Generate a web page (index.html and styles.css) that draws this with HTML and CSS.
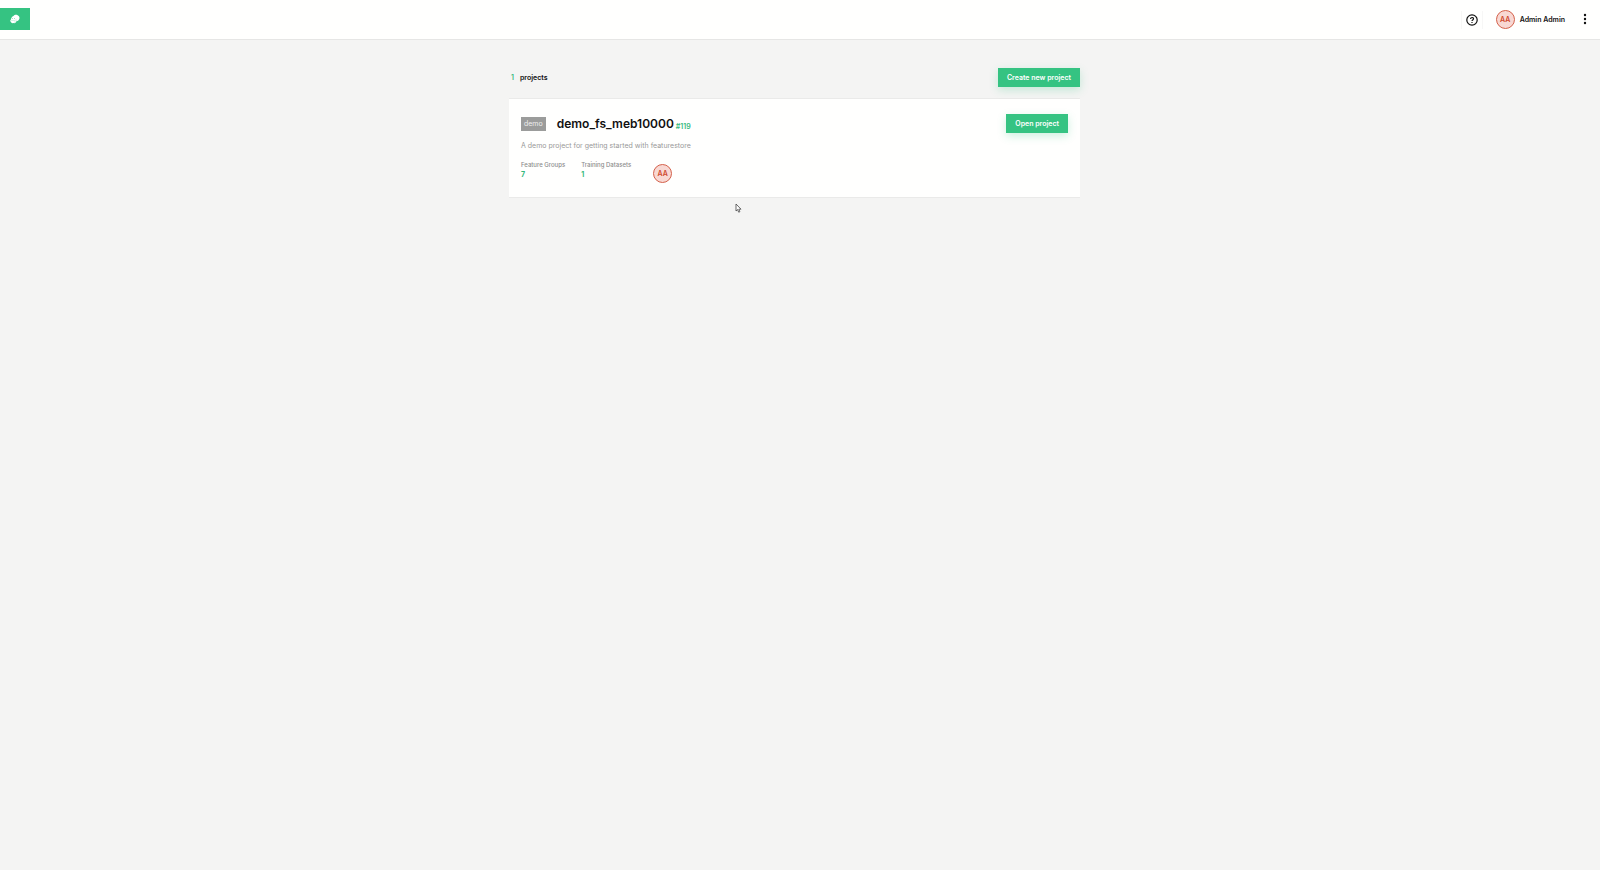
FILE: index.html
```html
<!DOCTYPE html>
<html lang="en">
<head>
    <meta charset="UTF-8">
    <meta name="viewport" content="width=device-width, initial-scale=1.0">
    <title>Projects</title>
    <link rel="stylesheet" href="styles.css">
</head>
<body>
    <header class="navbar">
        <a class="logo" href="#" aria-label="Home">
            <svg width="10" height="10" viewBox="0 0 20 20">
                <path fill="#fff" d="M7 4c2-4 8-3 9-1 3 1 4 6 2 8-1 2-3 3-5 3 0 3-3 5-6 4-2 1-5 0-5-2-2-1-2-4 0-5 0-3 2-6 5-7z"/>
                <g fill="#35c382" fill-opacity=".6">
                    <circle cx="5" cy="9" r="1"/>
                    <circle cx="9" cy="9" r="1"/>
                    <circle cx="4" cy="13" r="1"/>
                    <circle cx="8" cy="13" r="1"/>
                    <circle cx="12" cy="12" r="1"/>
                    <circle cx="10" cy="16" r="1"/>
                </g>
            </svg>
        </a>
        <div class="nav-right">
            <button class="help" aria-label="Help">
                <svg width="12" height="12" viewBox="0 0 12 12" fill="none" stroke="#111" stroke-width="1.2">
                    <circle cx="6" cy="6" r="5.2"/>
                    <path d="M4.6 4.9c0-1.9 2.9-1.8 2.9-.1 0 1.1-1.5 1.1-1.5 2.2M6 7.9v1.1"/>
                </svg>
            </button>
            <span class="avatar">AA</span>
            <span class="user-name">Admin Admin</span>
            <button class="more" aria-label="Menu">
                <svg width="4" height="12" viewBox="0 0 4 12" fill="#111">
                    <circle cx="2" cy="2" r="1.2"/>
                    <circle cx="2" cy="6" r="1.2"/>
                    <circle cx="2" cy="10" r="1.2"/>
                </svg>
            </button>
        </div>
    </header>

    <main class="projects">
        <div class="projects-head">
            <p class="count"><span class="green">1</span> projects</p>
            <button class="btn">Create new project</button>
        </div>
        <article class="card">
            <div class="card-head">
                <span class="tag">demo</span>
                <h2>demo_fs_meb10000</h2>
                <span class="project-id">#119</span>
                <button class="btn">Open project</button>
            </div>
            <p class="description">A demo project for getting started with featurestore</p>
            <div class="stats">
                <dl>
                    <dt>Feature Groups</dt>
                    <dd>7</dd>
                </dl>
                <dl>
                    <dt>Training Datasets</dt>
                    <dd>1</dd>
                </dl>
                <span class="avatar">AA</span>
            </div>
        </article>
    </main>

    <!-- mouse pointer -->
    <svg class="cursor" width="7" height="10" viewBox="0 0 7 10">
        <path fill="#fff" stroke="#444" stroke-width=".8" d="M1 1v7l1.6-1.4 1.1 2.6 1.2-.5-1.1-2.5H6z"/>
    </svg>
</body>
</html>
```
FILE: styles.css
```css
* {
    margin: 0;
    padding: 0;
    box-sizing: border-box;
}
body {
    font-family: Inter, sans-serif;
    font-size: 7px;
    line-height: 10px;
    color: #111;
    background-color: #f4f4f3;
    min-height: 100vh;
}
button {
    font: inherit;
    color: inherit;
    border: none;
    background: none;
    cursor: pointer;
}
svg {
    display: block;
}
.navbar {
    display: flex;
    align-items: center;
    justify-content: space-between;
    height: 40px;
    padding-right: 13px;
    background-color: #fffffe;
    border-bottom: 1px solid #e6e6e5;
}
.logo {
    display: flex;
    align-items: center;
    justify-content: center;
    width: 30px;
    height: 22px;
    margin-bottom: 1px;
    background-color: #35c382;
}
.nav-right {
    display: flex;
    align-items: center;
}
.help {
    padding: 3px 4px;
    margin-right: 13px;
    border-left: 1px solid #f7f7f6;
    border-right: 1px solid #f7f7f6;
}
.avatar {
    display: flex;
    align-items: center;
    justify-content: center;
    width: 19px;
    height: 19px;
    font-weight: 600;
    color: #cf482d;
    background-color: #f8d8d3;
    border: 1px solid #d4614b;
    border-radius: 50%;
}
.user-name {
    margin-left: 5px;
    font-weight: 600;
}
.more {
    margin-left: 18px;
    padding-bottom: 2px;
}
.projects {
    width: 582px;
    margin: 28px auto 0;
    padding-right: 11px;
}
.projects-head {
    display: flex;
    align-items: center;
    justify-content: space-between;
    padding-left: 2px;
    margin-bottom: 11px;
}
.count {
    display: flex;
    gap: 6px;
    font-weight: 600;
}
.green {
    color: #35b97c;
}
.btn {
    height: 19px;
    padding: 0 9px;
    font-weight: 600;
    color: #fff;
    background-color: #35c382;
    box-shadow: 0 3px 8px rgba(53, 195, 130, 0.25);
}
.card {
    padding: 15px 12px 10px;
    background-color: #fffffe;
    border-top: 1px solid #eaeae9;
    border-bottom: 1px solid #eaeae9;
}
.card-head {
    display: flex;
    align-items: center;
}
.card-head .btn {
    margin-left: auto;
}
.tag {
    height: 14px;
    padding: 0 3px;
    margin-right: 11px;
    line-height: 14px;
    color: #eee;
    background-color: #9b9c9b;
}
h2 {
    font-size: 12px;
    line-height: 14px;
    font-weight: 600;
}
.project-id {
    padding-top: 6px;
    margin-left: 2px;
    font-weight: 600;
    color: #35b97c;
}
.description {
    margin-top: 8px;
    color: #999;
}
.stats {
    display: flex;
    align-items: center;
    margin-top: 9px;
}
.stats dl {
    margin-right: 16px;
    margin-bottom: 7px;
}
.stats dt {
    font-size: 6px;
    font-weight: 500;
    color: #8c8c8c;
}
.stats dd {
    font-weight: 700;
    color: #35b97c;
}
.stats .avatar {
    margin-left: 6px;
}
.cursor {
    position: absolute;
    top: 203px;
    left: 735px;
}
```
